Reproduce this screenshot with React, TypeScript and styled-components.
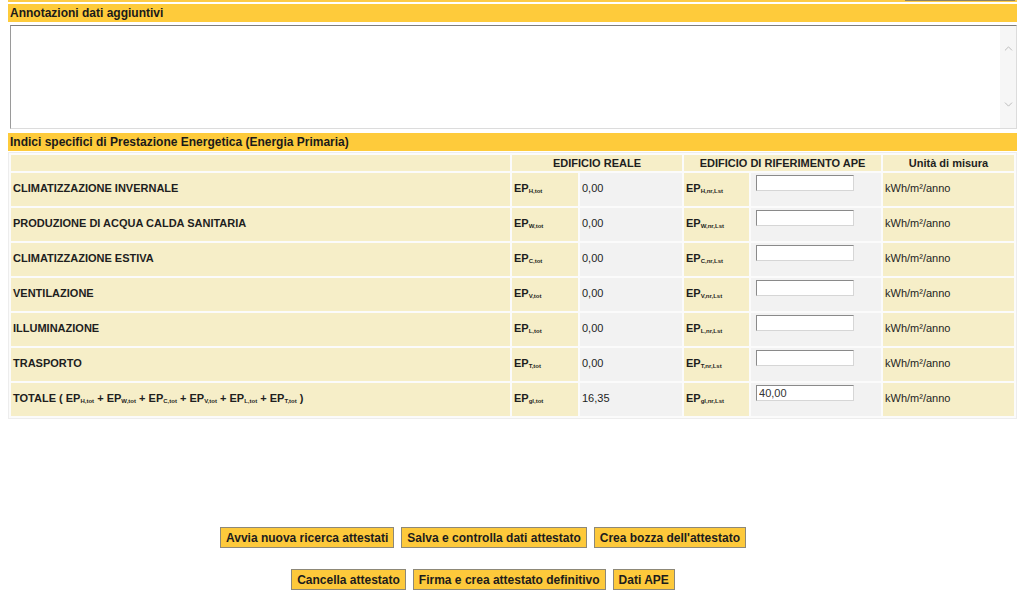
import React from 'react'
import styled, {createGlobalStyle} from 'styled-components'
import {ChevronUp, ChevronDown} from 'lucide-react'

const GlobalStyle = createGlobalStyle`
  body {
    margin: 0;
    background: #ffffff;
    font-family: "Liberation Sans", Arial, sans-serif;
    color: #1c1c1c;
  }
`

type Row = {
    label: React.ReactNode
    key: string
    value: string
    reference: string
}

const Page = styled.div`
  padding: 0 15px 0 8px;
`

const TopStrip = styled.div`
  height: 2px;
  background: #fdcb45;
  display: flex;
  justify-content: flex-end;
  margin-bottom: 2px;
`

const StripButtonEdge = styled.div`
  width: 110px;
  margin-right: 2px;
  height: 1px;
  background: #8c8166;
`

const SectionBar = styled.div`
  height: 18px;
  background: #fecb3b;
  display: flex;
  align-items: center;
  padding-left: 2px;
  font-size: 12px;
  font-weight: bold;
  color: #1a1a1a;
`

const NotesBox = styled.div`
  display: flex;
  height: 102px;
  margin: 3px 0 4px 2px;
  border-top: 1px solid #7d7d7d;
  border-left: 1px solid #9a9a9a;
  border-right: 1px solid #dcdcdc;
  border-bottom: 1px solid #dcdcdc;
  background: #ffffff;
`

const NotesArea = styled.textarea`
  flex: 1;
  border: none;
  outline: none;
  resize: none;
  overflow: hidden;
  font-family: "Liberation Sans", Arial, sans-serif;
  font-size: 12px;
  background: transparent;
`

const ScrollTrack = styled.div`
  width: 16px;
  background: #f6f6f6;
  display: flex;
  flex-direction: column;
  align-items: center;
  justify-content: space-between;
  padding: 16px 0 17px;
  color: #b4b4b4;
`

const Grid = styled.table`
  width: 1009px;
  margin-top: 1px;
  table-layout: fixed;
  border-collapse: separate;
  border-spacing: 2px;
  border: 1px solid #ededed;
  background: #fbfbfb;
  font-size: 11px;
`

const HeadCell = styled.th`
  height: 16px;
  padding: 0;
  background: #f6eec8;
  font-size: 11px;
  font-weight: bold;
  line-height: 14px;
  color: #1e1e1e;
  text-align: center;
`

const Cell = styled.td<{$tone?: 'beige' | 'grey'; $top?: boolean; $bold?: boolean}>`
  box-sizing: border-box;
  height: 33px;
  padding: ${p => (p.$top ? '2px 3px 0 5px' : '0 3px 3px 2px')};
  vertical-align: ${p => (p.$top ? 'top' : 'middle')};
  background: ${p => (p.$tone === 'grey' ? '#f2f2f2' : '#f6eec8')};
  font-weight: ${p => (p.$bold ? 'bold' : 'normal')};
  line-height: 14px;
  color: #1e1e1e;
  white-space: nowrap;
`

const Ep = styled.span`
  font-weight: bold;
  font-size: 11px;
`

const Sub = styled.sub`
  font-size: 6px;
  font-weight: bold;
  line-height: 0;
  vertical-align: -1px;
`

const RefInput = styled.input`
  box-sizing: border-box;
  display: block;
  width: 98px;
  height: 16px;
  padding: 0 2px;
  border-top: 1px solid #8a8a8a;
  border-left: 1px solid #8a8a8a;
  border-right: 1px solid #d6d6d6;
  border-bottom: 1px solid #d6d6d6;
  background: #ffffff;
  font-family: "Liberation Sans", Arial, sans-serif;
  font-size: 11px;
  color: #333333;
  outline: none;
`

const ButtonBar = styled.div`
  display: flex;
  flex-direction: column;
  align-items: center;
  gap: 21px;
  margin-top: 108px;
  padding-right: 59px;
`

const ButtonRow = styled.div`
  display: flex;
  gap: 7px;
`

const ActionButton = styled.button`
  height: 21px;
  padding: 0 5px;
  border: 1px solid #8d8878;
  background: #fdc93b;
  font-family: "Liberation Sans", Arial, sans-serif;
  font-size: 12px;
  font-weight: bold;
  color: #1c1c1c;
  cursor: pointer;
`

const EpLabel = ({sub}: {sub: string}) => (
    <Ep>EP<Sub>{sub}</Sub></Ep>
)

const rows: Row[] = [
    {label: 'CLIMATIZZAZIONE INVERNALE', key: 'H', value: '0,00', reference: ''},
    {label: 'PRODUZIONE DI ACQUA CALDA SANITARIA', key: 'W', value: '0,00', reference: ''},
    {label: 'CLIMATIZZAZIONE ESTIVA', key: 'C', value: '0,00', reference: ''},
    {label: 'VENTILAZIONE', key: 'V', value: '0,00', reference: ''},
    {label: 'ILLUMINAZIONE', key: 'L', value: '0,00', reference: ''},
    {label: 'TRASPORTO', key: 'T', value: '0,00', reference: ''},
    {
        label: (
            <>
                TOTALE ( <EpLabel sub="H,tot"/> + <EpLabel sub="W,tot"/> + <EpLabel sub="C,tot"/> + <EpLabel sub="V,tot"/> + <EpLabel sub="L,tot"/> + <EpLabel sub="T,tot"/> )
            </>
        ),
        key: 'gl',
        value: '16,35',
        reference: '40,00'
    }
]

const App = () => {
    return (
        <Page>
            <GlobalStyle/>
            <TopStrip>
                <StripButtonEdge/>
            </TopStrip>

            <SectionBar>Annotazioni dati aggiuntivi</SectionBar>
            <NotesBox>
                <NotesArea/>
                <ScrollTrack>
                    <ChevronUp size={13} strokeWidth={1.6}/>
                    <ChevronDown size={13} strokeWidth={1.6}/>
                </ScrollTrack>
            </NotesBox>

            <SectionBar>Indici specifici di Prestazione Energetica (Energia Primaria)</SectionBar>
            <Grid>
                <colgroup>
                    <col style={{width: 499}}/>
                    <col style={{width: 66}}/>
                    <col style={{width: 102}}/>
                    <col style={{width: 65}}/>
                    <col style={{width: 130}}/>
                    <col style={{width: 131}}/>
                </colgroup>
                <thead>
                    <tr>
                        <HeadCell/>
                        <HeadCell colSpan={2}>EDIFICIO REALE</HeadCell>
                        <HeadCell colSpan={2}>EDIFICIO DI RIFERIMENTO APE</HeadCell>
                        <HeadCell>Unità di misura</HeadCell>
                    </tr>
                </thead>
                <tbody>
                    {rows.map(row => (
                        <tr key={row.key}>
                            <Cell $bold>{row.label}</Cell>
                            <Cell><EpLabel sub={`${row.key},tot`}/></Cell>
                            <Cell $tone="grey">{row.value}</Cell>
                            <Cell><EpLabel sub={`${row.key},nr,Lst`}/></Cell>
                            <Cell $tone="grey" $top>
                                <RefInput defaultValue={row.reference}/>
                            </Cell>
                            <Cell>kWh/m²/anno</Cell>
                        </tr>
                    ))}
                </tbody>
            </Grid>

            <ButtonBar>
                <ButtonRow>
                    <ActionButton>Avvia nuova ricerca attestati</ActionButton>
                    <ActionButton>Salva e controlla dati attestato</ActionButton>
                    <ActionButton>Crea bozza dell'attestato</ActionButton>
                </ButtonRow>
                <ButtonRow>
                    <ActionButton>Cancella attestato</ActionButton>
                    <ActionButton>Firma e crea attestato definitivo</ActionButton>
                    <ActionButton>Dati APE</ActionButton>
                </ButtonRow>
            </ButtonBar>
        </Page>
    )
}

export default App
